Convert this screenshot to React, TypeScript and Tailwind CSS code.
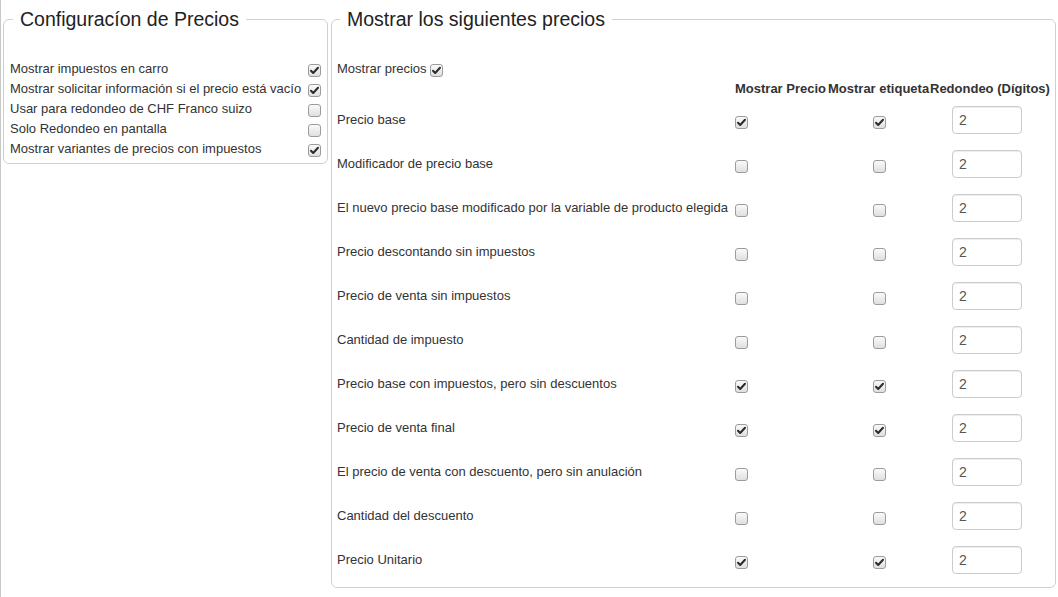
import React from "react";

const general = [
  { label: "Mostrar impuestos en carro", on: true },
  { label: "Mostrar solicitar información si el precio está vacío", on: true },
  { label: "Usar para redondeo de CHF Franco suizo", on: false },
  { label: "Solo Redondeo en pantalla", on: false },
  { label: "Mostrar variantes de precios con impuestos", on: true },
];

const prices = [
  { label: "Precio base", show: true, tag: true },
  { label: "Modificador de precio base", show: false, tag: false },
  { label: "El nuevo precio base modificado por la variable de producto elegida", show: false, tag: false },
  { label: "Precio descontando sin impuestos", show: false, tag: false },
  { label: "Precio de venta sin impuestos", show: false, tag: false },
  { label: "Cantidad de impuesto", show: false, tag: false },
  { label: "Precio base con impuestos, pero sin descuentos", show: true, tag: true },
  { label: "Precio de venta final", show: true, tag: true },
  { label: "El precio de venta con descuento, pero sin anulación", show: false, tag: false },
  { label: "Cantidad del descuento", show: false, tag: false },
  { label: "Precio Unitario", show: true, tag: true },
];

const Check = ({ on, className = "" }: { on: boolean; className?: string }) => (
  <svg width="13" height="13" viewBox="0 0 13 13" className={`shrink-0 ${className}`}>
    <defs>
      <linearGradient id="cbg" x1="0" y1="0" x2="0" y2="1">
        <stop offset="0" stopColor="#fbfbfb" />
        <stop offset="1" stopColor="#dedede" />
      </linearGradient>
    </defs>
    <rect x="0.5" y="0.5" width="12" height="12" rx="2.5" fill="url(#cbg)" stroke="#9c9c9c" />
    {on && <path d="M3 6.8 L5.2 9 L10 3.8" fill="none" stroke="#2b2b2b" strokeWidth="2" strokeLinecap="round" strokeLinejoin="round" />}
  </svg>
);

export default function App() {
  return (
    <div className="min-h-[597px] w-[1058px] border-l border-[#c8c8c8] bg-white text-[13px] text-[#333] flex items-start" style={{ fontFamily: '"Liberation Sans", Arial, sans-serif' }}>
      <fieldset className="ml-[2px] mt-[8px] w-[325px] rounded-[6px] border border-[#d0d0d0] px-[6px] pb-[4px]">
        <legend className="ml-[3px] px-[7px] text-[19.5px] leading-[22px] text-[#222]">Configuracíon de Precios</legend>
        <div className="mt-[29px] flex flex-col">
          {general.map((g) => (
            <div key={g.label} className="flex h-[20px] items-center justify-between whitespace-nowrap">
              <span>{g.label}</span>
              <Check on={g.on} className="mt-[3px]" />
            </div>
          ))}
        </div>
      </fieldset>

      <fieldset className="ml-[3px] mt-[8px] w-[724px] rounded-[6px] border border-[#d0d0d0] px-[5px] pb-[5px]">
        <legend className="ml-[3px] px-[7px] text-[19.5px] leading-[22px] text-[#222]">Mostrar los siguientes precios</legend>
        <div className="mt-[29px] flex h-[20px] items-center gap-[3px]">
          <span>Mostrar precios</span>
          <Check on className="mt-[3px]" />
        </div>
        <div className="grid grid-cols-[396px_95px_102px_1fr]">
          <div className="h-[19px]" />
          <div className="flex h-[19px] items-center px-[2px] font-bold whitespace-nowrap">Mostrar Precio</div>
          <div className="flex h-[19px] items-center font-bold whitespace-nowrap">Mostrar etiqueta</div>
          <div className="flex h-[19px] items-center font-bold whitespace-nowrap">Redondeo (Dígitos)</div>
          {prices.map((p) => (
            <React.Fragment key={p.label}>
              <div className="flex h-[44px] items-center whitespace-nowrap">{p.label}</div>
              <div className="flex h-[44px] items-center px-[2px]">
                <Check on={p.show} className="mt-[5px]" />
              </div>
              <div className="flex h-[44px] items-center justify-center">
                <Check on={p.tag} className="mt-[5px]" />
              </div>
              <div className="flex h-[44px] items-center">
                <input
                  defaultValue="2"
                  className="ml-[22px] h-[28px] w-[70px] rounded-[4px] border border-[#ccc] px-[6px] text-[14px] text-[#555] shadow-[inset_0_1px_1px_rgba(0,0,0,0.075)] outline-none"
                />
              </div>
            </React.Fragment>
          ))}
        </div>
      </fieldset>
    </div>
  );
}
